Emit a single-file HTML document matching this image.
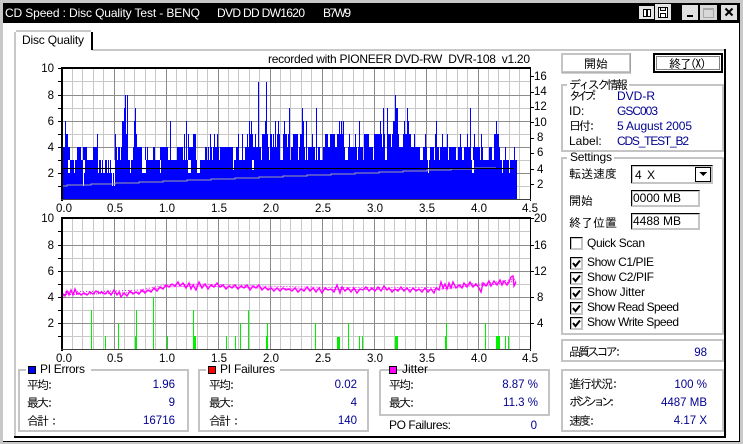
<!DOCTYPE html>
<html><head><meta charset="utf-8"><title>CD Speed</title>
<style>
html,body{margin:0;padding:0;background:#fff;width:743px;height:444px;overflow:hidden}
svg{display:block}
text{font:12px "Liberation Sans","IPAGothic",sans-serif;fill:#000}
.n{font-size:11.5px}
.j{font-family:"IPAGothic","Liberation Sans",sans-serif;font-size:12px}
.b{fill:#000090}
.e{text-anchor:end}
.c{text-anchor:middle}
.g{fill:none;stroke:#c4c4c4;stroke-width:2}
</style></head><body>
<svg width="743" height="444" viewBox="0 0 743 444" xmlns="http://www.w3.org/2000/svg" shape-rendering="crispEdges">
<rect width="743" height="444" fill="#fff"/>
<!-- outer frame -->
<rect x="0" y="0" width="743" height="3" fill="#c8c8c8"/>
<rect x="0" y="0" width="3" height="444" fill="#c8c8c8"/>
<rect x="740" y="0" width="3" height="444" fill="#c8c8c8"/>
<rect x="0" y="441" width="743" height="3" fill="#c8c8c8"/>
<rect x="3" y="441" width="737" height="1" fill="#000"/>
<rect x="739" y="23" width="1" height="419" fill="#000"/>
<rect x="3" y="3" width="737" height="20" fill="#000"/>
<text x="5" y="17" style="fill:#fff" textLength="195">CD Speed : Disc Quality Test - BENQ</text>
<text x="217" y="17" style="fill:#fff" textLength="88">DVD DD DW1620</text>
<text x="323" y="17" style="fill:#fff" textLength="28">B7W9</text>
<!-- title icons -->
<rect x="639" y="6" width="15" height="13" fill="#e4e4e4"/>
<path d="M643.500 9.500h3v7h-3zM647.500 9.500h3v7h-3z" fill="#fff" stroke="#000"/>
<rect x="655" y="4" width="16" height="16" fill="#e4e4e4"/>
<path d="M658.500 7.500h9v10h-9zM660.500 7.500v3h5v-3M660.500 17.500v-4h5v4" fill="#fff" stroke="#000"/>
<rect x="682" y="5" width="16" height="15" fill="#e0e0e0"/>
<rect x="687" y="15" width="6" height="2" fill="#000"/>
<rect x="700" y="5" width="17" height="15" fill="#d8d8d8"/>
<rect x="703.500" y="8.500" width="10" height="9" fill="none" stroke="#a8a8a8"/>
<rect x="703" y="8" width="11" height="2" fill="#a8a8a8"/>
<rect x="721" y="5" width="16" height="15" fill="#e0e0e0"/>
<path d="M725.500 8.500l7 7M732.500 8.500l-7 7" stroke="#000" stroke-width="2" shape-rendering="auto"/>

<!-- tab panel -->
<rect x="14" y="49" width="2" height="388" fill="#c8c8c8"/>
<rect x="14" y="32" width="2" height="18" fill="#c8c8c8"/>
<rect x="92" y="49" width="634" height="2" fill="#c8c8c8"/>
<rect x="724" y="49" width="2" height="389" fill="#000"/>
<rect x="14" y="436" width="712" height="2" fill="#000"/>
<rect x="16" y="30" width="75" height="2" fill="#c8c8c8"/>
<rect x="91" y="32" width="2" height="18" fill="#000"/>
<text x="22" y="44" textLength="62">Disc Quality</text>

<text x="268" y="63" textLength="262">recorded with PIONEER DVD-RW&#160; DVR-108&#160; v1.20</text>

<!-- CHART 1 GRID -->
<g fill="none" stroke-width="1">
<path stroke="#c8c8c8" d="M72.500 68V200M82.500 68V200M93.500 68V200M103.500 68V200M124.500 68V200M134.500 68V200M145.500 68V200M155.500 68V200M176.500 68V200M186.500 68V200M197.500 68V200M207.500 68V200M228.500 68V200M238.500 68V200M249.500 68V200M259.500 68V200M280.500 68V200M290.500 68V200M301.500 68V200M311.500 68V200M332.500 68V200M342.500 68V200M353.500 68V200M363.500 68V200M384.500 68V200M394.500 68V200M405.500 68V200M415.500 68V200M436.500 68V200M446.500 68V200M457.500 68V200M467.500 68V200M488.500 68V200M498.500 68V200M509.500 68V200M519.500 68V200M62 81.500H530M62 108.500H530M62 134.500H530M62 160.500H530M62 186.500H530"/>
<path stroke="#8c8c8c" d="M114.500 68V200M166.500 68V200M218.500 68V200M270.500 68V200M322.500 68V200M374.500 68V200M426.500 68V200M478.500 68V200M62 95.500H530M62 121.500H530M62 147.500H530M62 173.500H530"/>
</g>
<!-- blue data -->
<rect x="62" y="160" width="455" height="40" fill="#0000ff"/>
<path fill="none" stroke="#0000ff" stroke-width="13" d="M62 153.500H70M77 153.500H81M83 153.500H87M93 153.500H98M115 153.500H117M118 153.500H120M121 153.500H128M133 153.500H136M137 153.500H142M145 153.500H146M147 153.500H148M153 153.500H155M160 153.500H168M177 153.500H183M188 153.500H196M205 153.500H207M208 153.500H209M210 153.500H212M213 153.500H214M215 153.500H217M218 153.500H219M220 153.500H233M236 153.500H238M242 153.500H243M245 153.500H252M253 153.500H261M262 153.500H269M270 153.500H280M283 153.500H290M291 153.500H298M299 153.500H305M308 153.500H315M318 153.500H320M323 153.500H345M348 153.500H357M358 153.500H363M364 153.500H373M374 153.500H385M387 153.500H420M423 153.500H427M430 153.500H434M435 153.500H439M440 153.500H447M449 153.500H456M458 153.500H462M464 153.500H470M473 153.500H480M482 153.500H483M489 153.500H492M494 153.500H500M505 153.500H506M514 153.500H515"/>
<path fill="none" stroke="#0000ff" stroke-width="26" d="M66 147H68M97 147H98M115 147H116M122 147H128M136 147H137M184 147H185M188 147H189M193 147H196M210 147H211M214 147H215M217 147H218M238 147H239M242 147H243M247 147H248M249 147H253M255 147H256M258 147H259M262 147H265M267 147H268M270 147H272M273 147H274M275 147H276M277 147H280M283 147H287M288 147H289M293 147H298M300 147H304M306 147H307M312 147H313M325 147H328M330 147H335M337 147H344M349 147H350M355 147H356M359 147H360M364 147H369M374 147H378M378 147H382M383 147H385M387 147H391M392 147H399M403 147H411M414 147H415M425 147H426M435 147H436M442 147H443M447 147H448M460 147H461M467 147H468M474 147H475M481 147H482M494 147H499"/>
<path fill="none" stroke="#0000ff" stroke-width="1" d="M65.500 121V160M122.500 121V160M123.500 121V160M134.500 121V160M170.500 121V160M186.500 121V160M249.500 121V160M251.500 121V160M265.500 121V160M275.500 121V160M278.500 121V160M284.500 121V160M303.500 121V160M306.500 121V160M339.500 121V160M341.500 121V160M343.500 121V160M359.500 121V160M380.500 121V160M393.500 121V160M394.500 121V160M395.500 121V160M404.500 121V160M408.500 121V160M436.500 121V160M496.500 121V160M124.500 108V160M135.500 108V160M289.500 108V160M302.500 108V160M316.500 108V160M383.500 108V160M387.500 108V160M396.500 108V160M397.500 108V160M407.500 108V160M470.500 108V160M125.500 95V160M127.500 95V160M395.500 95V160M258.500 82V160M266.500 82V160"/>
<!-- notches -->
<path fill="none" stroke="#fff" stroke-width="1" d="M68.500 160V173M69.500 160V173M74.500 160V173M83.500 160V186M84.500 160V173M98.500 160V173M101.500 160V173M103.500 160V173M104.500 160V173M107.500 160V173M109.500 160V173M111.500 160V173M112.500 160V186M113.500 160V173M114.500 160V186M130.500 160V173M142.500 160V173M143.500 160V173M144.500 160V173M145.500 160V173M160.500 160V173M188.500 160V173M189.500 160V173M190.500 160V173M197.500 160V173M198.500 160V173M199.500 160V173M233.500 160V170M252.500 160V170M253.500 160V170M428.500 160V173M472.500 160V173M473.500 160V173M502.500 160V173M509.500 160V173"/>
<path fill="none" stroke="#a0a0a0" d="M62 186h5v-1h24v-1h24v-1h24v-1h24v-1h24v-1h24v-1h24v-1h24v-1h24v-1h24v-1h24v-1h24v-1h24v-1h24v-1h24v-1h24v-1h24v-1h21"/>
<rect x="62" y="168" width="452" height="1" fill="#000"/>
<!-- axes chart 1 -->
<rect x="61" y="67" width="470" height="2" fill="#000"/>
<rect x="61" y="67" width="2" height="134" fill="#000"/>
<rect x="530" y="67" width="1" height="134" fill="#000"/>
<rect x="61" y="199" width="470" height="1" fill="#404040"/>
<path stroke="#000" fill="none" d="M58 68.500h3M58 95.500h3M58 121.500h3M58 147.500h3M58 173.500h3M58 81.500h3M58 108.500h3M58 134.500h3M58 160.500h3M58 186.500h3M531 76.500h3M531 92.500h3M531 107.500h3M531 122.500h3M531 138.500h3M531 153.500h3M531 169.500h3M531 184.500h3"/>
<text class="n e" x="54" y="72">10</text><text class="n e" x="54" y="99">8</text><text class="n e" x="54" y="125">6</text><text class="n e" x="54" y="151">4</text><text class="n e" x="54" y="177">2</text>
<text class="n" x="534" y="80">16</text><text class="n" x="534" y="95">14</text><text class="n" x="534" y="110">12</text><text class="n" x="534" y="126">10</text><text class="n" x="537" y="141">8</text><text class="n" x="537" y="156">6</text><text class="n" x="537" y="173">4</text><text class="n" x="537" y="188">2</text>
<text class="n c" x="64" y="212">0.0</text><text class="n c" x="115" y="212">0.5</text><text class="n c" x="167" y="212">1.0</text><text class="n c" x="219" y="212">1.5</text><text class="n c" x="271" y="212">2.0</text><text class="n c" x="323" y="212">2.5</text><text class="n c" x="375" y="212">3.0</text><text class="n c" x="427" y="212">3.5</text><text class="n c" x="479" y="212">4.0</text><text class="n c" x="530" y="212">4.5</text>

<!-- CHART 2 GRID -->
<g fill="none" stroke-width="1">
<path stroke="#c8c8c8" d="M72.500 218V350M82.500 218V350M93.500 218V350M103.500 218V350M124.500 218V350M134.500 218V350M145.500 218V350M155.500 218V350M176.500 218V350M186.500 218V350M197.500 218V350M207.500 218V350M228.500 218V350M238.500 218V350M249.500 218V350M259.500 218V350M280.500 218V350M290.500 218V350M301.500 218V350M311.500 218V350M332.500 218V350M342.500 218V350M353.500 218V350M363.500 218V350M384.500 218V350M394.500 218V350M405.500 218V350M415.500 218V350M436.500 218V350M446.500 218V350M457.500 218V350M467.500 218V350M488.500 218V350M498.500 218V350M509.500 218V350M519.500 218V350M62 231.500H530M62 258.500H530M62 284.500H530M62 310.500H530M62 336.500H530"/>
<path stroke="#8c8c8c" d="M114.500 218V350M166.500 218V350M218.500 218V350M270.500 218V350M322.500 218V350M374.500 218V350M426.500 218V350M478.500 218V350M62 245.500H530M62 271.500H530M62 297.500H530M62 323.500H530"/>
</g>
<path fill="none" stroke="#00f000" stroke-width="1" d="M91.500 310V349M105.500 336V349M118.500 323V349M135.500 336V349M136.500 310V349M153.500 297V349M167.500 336V349M193.500 310V349M194.500 336V349M195.500 336V349M226.500 336V349M235.500 336V349M240.500 323V349M248.500 310V349M266.500 336V349M267.500 323V349M315.500 323V349M337.500 337V349M338.500 337V349M339.500 337V349M348.500 323V349M359.500 336V349M362.500 336V349M395.500 336V349M396.500 336V349M397.500 336V349M445.500 336V349M446.500 323V349M485.500 323V349M496.500 336V349M497.500 336V349M498.500 336V349M499.500 336V349M505.500 336V349M508.500 336V349"/>
<g shape-rendering="auto" fill="none" stroke="#ff00ff">
<polyline id="jl" stroke-width="1.400" points="62,301 63,294 65,296 67,291 69,295 71,290 73,295 75,289 77,294 79,293 81,295 84,293 87,295 90,292 93,294 96,291 99,293 102,292 105,294 108,291 111,295 114,290 117,295 119,292 121,297 124,293 127,296 130,291 133,294 136,292 139,294 142,290 145,293 148,290 151,292 154,288 157,291 160,287 163,289 166,285 169,287 172,284 175,286 178,282 180,286 183,283 186,288 189,283 191,289 193,285 196,290 199,282 202,288 205,284 208,289 211,285 214,287 217,283 220,287 223,285 226,289 229,286 232,288 235,285 238,289 241,286 244,288 247,285 250,290 253,286 256,288 259,285 262,290 265,287 268,290 271,288 274,291 277,288 280,291 283,288 286,290 289,289 292,291 295,288 298,292 301,289 304,291 307,287 310,291 313,288 316,292 319,288 322,293 325,288 328,290 331,289 334,292 337,285 340,293 342,287 345,291 348,288 351,292 354,288 357,293 360,289 363,290 366,287 369,291 372,288 375,291 378,287 381,291 384,286 387,290 389,288 392,292 395,289 398,291 401,287 404,291 407,288 410,292 413,288 416,291 419,289 422,292 425,288 428,292 431,289 434,293 436,288 439,290 441,282 443,288 445,284 447,289 449,283 451,288 453,282 456,288 459,285 462,288 464,283 467,287 470,282 473,287 476,284 479,288 481,292 483,283 486,286 489,281 491,286 494,281 497,285 500,280 502,285 504,281 507,285 509,282 511,277 513,276 514,286 516,282"/>
<path stroke-width="1" stroke-dasharray="1 1" d="M62 294.500L115 293.500L140 292L165 287L200 286L260 288L330 289.500L436 289.500L475 285.500L490 285L516 281"/>
<path stroke-width="1" stroke-dasharray="1 2" d="M62 292L115 291L140 290L165 285L200 284L260 286L330 287.500L436 287.500L475 283.500L490 283L516 279"/>
</g>
<rect x="61" y="217" width="470" height="2" fill="#000"/>
<rect x="61" y="217" width="2" height="134" fill="#000"/>
<rect x="530" y="217" width="1" height="134" fill="#000"/>
<rect x="61" y="349" width="470" height="1" fill="#404040"/>
<path stroke="#000" fill="none" d="M58 245.500h3M58 271.500h3M58 297.500h3M58 323.500h3M58 231.500h3M58 258.500h3M58 284.500h3M58 310.500h3M58 336.500h3M531 218.500h3M531 245.500h3M531 271.500h3M531 297.500h3M531 323.500h3"/>
<text class="n e" x="54" y="222">10</text><text class="n e" x="54" y="249">8</text><text class="n e" x="54" y="275">6</text><text class="n e" x="54" y="301">4</text><text class="n e" x="54" y="327">2</text>
<text class="n" x="534" y="222">20</text><text class="n" x="534" y="249">16</text><text class="n" x="534" y="275">12</text><text class="n" x="537" y="301">8</text><text class="n" x="537" y="327">4</text>
<text class="n c" x="64" y="362">0.0</text><text class="n c" x="115" y="362">0.5</text><text class="n c" x="167" y="362">1.0</text><text class="n c" x="219" y="362">1.5</text><text class="n c" x="271" y="362">2.0</text><text class="n c" x="323" y="362">2.5</text><text class="n c" x="375" y="362">3.0</text><text class="n c" x="427" y="362">3.5</text><text class="n c" x="479" y="362">4.0</text><text class="n c" x="530" y="362">4.5</text>

<!-- STAT GROUPS -->
<path class="g" d="M26 370H19V431H188V370H91"/>
<rect x="28.500" y="366.500" width="7" height="7" fill="#0000ff" stroke="#000"/>
<text x="40" y="373" textLength="45">PI Errors</text>
<text class="j" x="27" y="389" textLength="26">平均:</text><text class="j" x="27" y="407" textLength="26">最大:</text><text class="j" x="27" y="425" textLength="30">合計 :</text>
<text class="n e b" x="175" y="388">1.96</text><text class="n e b" x="175" y="406">9</text><text class="n e b" x="175" y="424">16716</text>

<path class="g" d="M206 370H199V431H368V370H280"/>
<rect x="208.500" y="366.500" width="7" height="7" fill="#ff0000" stroke="#000"/>
<text x="220" y="373" textLength="55">PI Failures</text>
<text class="j" x="209" y="389" textLength="26">平均:</text><text class="j" x="209" y="407" textLength="26">最大:</text><text class="j" x="209" y="425" textLength="30">合計 :</text>
<text class="n e b" x="357" y="388">0.02</text><text class="n e b" x="357" y="406">4</text><text class="n e b" x="357" y="424">140</text>

<path class="g" d="M380 370V415H549V370H380"/>
<rect x="389.500" y="366.500" width="7" height="7" fill="#ff00ff" stroke="#000"/>
<text x="402" y="373" textLength="26">Jitter</text>
<text class="j" x="389" y="389" textLength="26">平均:</text><text class="j" x="389" y="407" textLength="26">最大:</text>
<text class="n e b" x="538" y="388">8.87 %</text><text class="n e b" x="538" y="406">11.3 %</text>
<text x="389" y="429" textLength="62">PO Failures:</text>
<text class="n e b" x="537" y="429">0</text>

<!-- BUTTONS -->
<rect x="562" y="54" width="68" height="18" fill="#fff" stroke="#c4c4c4" stroke-width="2"/>
<path d="M630.500 53v20h-69" stroke="#a0a0a0" fill="none"/>
<text class="j" x="584" y="68" textLength="24">開始</text>
<rect x="654" y="54" width="68" height="18" fill="#fff" stroke="#000" stroke-width="2"/>
<rect x="656.500" y="56.500" width="63" height="13" fill="none" stroke="#000" stroke-dasharray="1 1"/>
<text class="j" x="669" y="68" textLength="37">終了(X)</text>

<!-- disc info -->
<path class="g" d="M567 85H562V151H723V85H629"/>
<text class="j" x="569" y="89" textLength="59">ディスク情報</text>
<text class="j" x="569" y="100" textLength="28">タイプ:</text>
<text x="569" y="115">ID:</text>
<text class="j" x="569" y="130" textLength="26">日付:</text>
<text x="569" y="145">Label:</text>
<text class="b" x="617" y="100" textLength="38">DVD-R</text>
<text class="b" x="617" y="115" textLength="41">GSC003</text>
<text class="b" x="617" y="130" textLength="75">5 August 2005</text>
<text class="b" x="617" y="145" textLength="72">CDS_TEST_B2</text>

<!-- settings -->
<path class="g" d="M567 158H562V334H723V158H614"/>
<text x="570" y="161" textLength="42">Settings</text>
<text class="j" x="569" y="178" textLength="48">転送速度</text>
<rect x="632" y="166" width="80" height="17" fill="#fff" stroke="#c4c4c4" stroke-width="2"/>
<path d="M631.500 183v-17.500h81" stroke="#000" fill="none"/>
<text x="635" y="179" textLength="20">4 X</text>
<rect x="695.500" y="167.500" width="15" height="14" fill="#fff" stroke="#000"/>
<path d="M699 172h8l-4 4z" fill="#000"/>
<text class="j" x="569" y="205" textLength="24">開始</text>
<rect x="632" y="191" width="67" height="15" fill="#fff" stroke="#c4c4c4" stroke-width="2"/>
<path d="M631.500 206v-15.500h68" stroke="#000" fill="none"/>
<text x="633" y="202" textLength="48">0000 MB</text>
<text class="j" x="569" y="227" textLength="48">終了位置</text>
<rect x="632" y="214" width="67" height="15" fill="#fff" stroke="#c4c4c4" stroke-width="2"/>
<path d="M631.500 229v-15.500h68" stroke="#000" fill="none"/>
<text x="633" y="225" textLength="48">4488 MB</text>
<g fill="#fff" stroke="#c4c4c4" stroke-width="2">
<rect x="571" y="238" width="11" height="11"/>
<rect x="571" y="258" width="11" height="11"/>
<rect x="571" y="273" width="11" height="11"/>
<rect x="571" y="288" width="11" height="11"/>
<rect x="571" y="303" width="11" height="11"/>
<rect x="571" y="318" width="11" height="11"/>
</g>
<path fill="none" stroke="#000" d="M570.500 249v-11.500h12M570.500 269v-11.500h12M570.500 284v-11.500h12M570.500 299v-11.500h12M570.500 314v-11.500h12M570.500 329v-11.500h12"/>
<path fill="none" stroke="#000" stroke-width="2" shape-rendering="auto" d="M573 263l2.500 3 4.500-5.500M573 278l2.500 3 4.500-5.500M573 293l2.500 3 4.500-5.500M573 308l2.500 3 4.500-5.500M573 323l2.500 3 4.500-5.500"/>
<text x="587" y="247" textLength="58">Quick Scan</text>
<text x="587" y="266" textLength="67">Show C1/PIE</text>
<text x="587" y="281" textLength="67">Show C2/PIF</text>
<text x="587" y="296" textLength="58">Show Jitter</text>
<text x="587" y="311" textLength="92">Show Read Speed</text>
<text x="587" y="326" textLength="92">Show Write Speed</text>

<!-- score -->
<rect x="562" y="340" width="161" height="21" class="g"/>
<text class="j" x="569" y="356" textLength="52">品質スコア:</text>
<text class="n e b" x="707" y="356">98</text>
<!-- progress -->
<rect x="562" y="370" width="161" height="61" class="g"/>
<text class="j" x="569" y="388" textLength="49">進行状況:</text>
<text class="j" x="569" y="406" textLength="46">ポジション:</text>
<text class="j" x="569" y="425" textLength="26">速度:</text>
<text class="n e b" x="707" y="388">100 %</text>
<text class="n e b" x="707" y="406">4487 MB</text>
<text class="n e b" x="707" y="424">4.17 X</text>
</svg>
</body></html>
